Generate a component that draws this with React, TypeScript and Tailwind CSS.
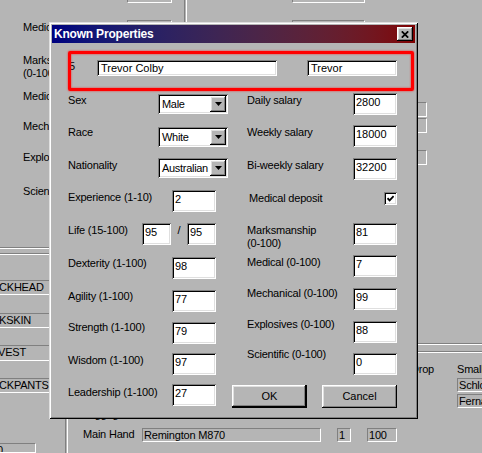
import React from "react";

const sunkenWhite =
  "bg-white shadow-[inset_1px_1px_0_#808080,inset_-1px_-1px_0_#ffffff,inset_2px_2px_0_#000000,inset_-2px_-2px_0_#dfdfdf]";
const raised =
  "bg-[#b5b5b5] shadow-[inset_-1px_-1px_0_#000000,inset_1px_1px_0_#ffffff,inset_-2px_-2px_0_#808080,inset_2px_2px_0_#dfdfdf]";
const flatField =
  "border border-t-[#808080] border-l-[#808080] border-r-white border-b-white";
const hGroove = "h-[2px] border-t border-b border-t-[#808080] border-b-white";
const vGroove = "w-[3px] shrink-0 border-l border-r border-l-[#808080] border-r-white";

function Input({ value, w = "w-[44px]" }: { value: string; w?: string }) {
  return (
    <div className={`${w} h-[22px] shrink-0 ${sunkenWhite} pl-[3px] pt-[3px] leading-[13px] tracking-normal whitespace-nowrap`}>
      {value}
    </div>
  );
}

function Combo({ value }: { value: string }) {
  return (
    <div className={`w-[70px] h-[20px] shrink-0 ${sunkenWhite} p-[2px] flex items-center`}>
      <span className="flex-1 pl-[2px] leading-[13px] tracking-[-0.3px] whitespace-nowrap overflow-hidden">{value}</span>
      <div className={`w-[16px] h-[16px] shrink-0 ${raised} flex items-center justify-center`}>
        <svg width="7" height="4" viewBox="0 0 7 4">
          <polygon points="0,0 7,0 3.5,4" fill="#000" />
        </svg>
      </div>
    </div>
  );
}

function LeftRow({
  h,
  label,
  lw,
  lmt,
  children,
}: {
  h: string;
  label: string;
  lw: string;
  lmt: string;
  children: React.ReactNode;
}) {
  return (
    <div className={`flex items-start ${h}`}>
      <div className={`${lw} ${lmt} shrink-0 whitespace-nowrap`}>{label}</div>
      {children}
    </div>
  );
}

export default function App() {
  return (
    <div className="relative w-[482px] h-[453px] overflow-hidden bg-[#b5b5b5] font-['Liberation_Sans',Arial,sans-serif] text-[11px] leading-[13px] text-black tracking-[-0.2px]">
      {/* Background application */}
      <div className="flex flex-col">
        {/* Band 1 */}
        <div className="flex h-[247px] shrink-0">
          <div className="w-[49px] shrink-0 pl-[23px] flex flex-col whitespace-nowrap overflow-hidden">
            <div className="mt-[21px]">Medical deposit</div>
            <div className="mt-[20px]">
              Marksmanship
              <br />
              (0-100)
            </div>
            <div className="mt-[10px]">Medical (0-100)</div>
            <div className="mt-[17px]">Mechanical (0-100)</div>
            <div className="mt-[18px]">Explosives (0-100)</div>
            <div className="mt-[21px]">Scientific (0-100)</div>
          </div>
          <div className="w-[78px] shrink-0" />
          <div className="w-[57px] shrink-0 flex flex-col">
            <div className="w-[45px] h-[3px] border-l border-r border-b border-l-[#808080] border-r-white border-b-white" />
            <div className={`mt-[17px] w-[45px] h-[21px] ${flatField}`} />
          </div>
          <div className={vGroove} />
          <div className="w-[105px] shrink-0" />
          <div className="w-[73px] shrink-0 flex flex-col">
            <div className="w-[73px] h-[3px] border-l border-r border-b border-l-[#808080] border-r-white border-b-white" />
            <div className={`mt-[17px] w-[73px] h-[21px] ${flatField}`} />
          </div>
          <div className="w-[15px] shrink-0" />
          <div className="w-[47px] shrink-0 flex flex-col">
            <div className={`mt-[102px] h-[15px] ${flatField}`} />
            <div className={`mt-[1px] h-[15px] ${flatField}`} />
            <div className={`mt-[17px] h-[15px] ${flatField}`} />
          </div>
        </div>

        {/* Band 2 */}
        <div className="flex h-[172px] shrink-0">
          <div className="w-[65px] shrink-0 flex flex-col">
            <div className={hGroove} />
            <div className={`mt-[4px] ${hGroove}`} />
            <div className={`mt-[25px] -ml-[10px] w-[75px] h-[15px] ${flatField} pl-[8px] whitespace-nowrap overflow-hidden`}>CKHEAD</div>
            <div className={`mt-[18px] -ml-[10px] w-[75px] h-[15px] ${flatField} pl-[8px] whitespace-nowrap overflow-hidden`}>KSKIN</div>
            <div className={`mt-[17px] -ml-[10px] w-[75px] h-[16px] ${flatField} pl-[7px] whitespace-nowrap overflow-hidden`}>VEST</div>
            <div className={`mt-[17px] -ml-[10px] w-[75px] h-[15px] ${flatField} pl-[8px] whitespace-nowrap overflow-hidden`}>CKPANTS</div>
          </div>
          <div className="flex-1" />
          <div className="w-[64px] shrink-0 flex flex-col">
            <div className={`mt-[96px] ${hGroove}`} />
            <div className={`mt-[6px] ${hGroove}`} />
            <div className="mt-[10px] flex">
              <div className="w-[39px] shrink-0">
                <span className="block -ml-[7px]">Drop</span>
              </div>
              <div className="flex-1 flex flex-col whitespace-nowrap">
                <div>Small Arms</div>
                <div className={`mt-[2px] w-[40px] h-[14px] ${flatField} pl-[1px] leading-[12px] overflow-hidden`}>Schlosser</div>
                <div className={`mt-[2px] w-[40px] h-[14px] ${flatField} pl-[1px] leading-[12px] overflow-hidden`}>Fernandez</div>
              </div>
            </div>
          </div>
        </div>

        {/* Band 3 */}
        <div className="flex h-[34px] shrink-0">
          <div className="w-[36px] shrink-0 flex flex-col">
            <div className={`mt-[24px] -ml-[10px] w-[46px] h-[15px] ${flatField} pl-[6px] overflow-hidden`}>0</div>
          </div>
          <div className="w-[29px] shrink-0" />
          <div className={vGroove} />
          <div className="w-[15px] shrink-0" />
          <div className="flex flex-col">
            <div className="-mt-[11px] h-[13px] whitespace-nowrap">Luggage</div>
            <div className="mt-[7px] flex items-start">
              <div className="w-[59px] shrink-0 whitespace-nowrap">Main Hand</div>
              <div className={`w-[179px] h-[14px] shrink-0 ${flatField} pl-[1px] leading-[12px] whitespace-nowrap overflow-hidden`}>
                Remington M870
              </div>
              <div className={`ml-[16px] w-[14px] h-[14px] shrink-0 ${flatField} pl-[1px] leading-[12px]`}>1</div>
              <div className={`ml-[16px] w-[30px] h-[14px] shrink-0 ${flatField} pl-[1px] leading-[12px]`}>100</div>
            </div>
          </div>
        </div>
      </div>

      {/* Dialog window */}
      <div className="absolute left-[49px] top-[22px] w-[369px] h-[397px] bg-[#b5b5b5] p-[3px] flex flex-col shadow-[inset_1px_1px_0_#dfdfdf,inset_-1px_-1px_0_#000000,inset_2px_2px_0_#ffffff,inset_-2px_-2px_0_#808080]">
        <div className="h-[18px] shrink-0 flex items-center justify-between pl-[2px] pr-[2px] bg-linear-to-r from-[#000080] to-[#800000]">
          <span className="text-white font-bold text-[12px] leading-[14px] tracking-[-0.2px]">Known Properties</span>
          <div className={`w-[16px] h-[14px] ${raised} flex items-center justify-center`}>
            <svg width="8" height="7" viewBox="0 0 8 7">
              <path d="M0.8 0.3 L7.2 6.7 M7.2 0.3 L0.8 6.7" stroke="#000" strokeWidth="1.7" />
            </svg>
          </div>
        </div>

        <div className="pl-[16px] pt-[17px] flex flex-col">
          {/* Name row */}
          <div className="flex h-[16px]">
            <div className="w-[29px] shrink-0 pl-[1px]">5</div>
            <div className={`w-[180px] h-[16px] shrink-0 ${sunkenWhite} pl-[4px] pt-[2px] leading-[13px] tracking-normal`}>Trevor Colby</div>
            <div className={`ml-[30px] w-[90px] h-[16px] shrink-0 ${sunkenWhite} pl-[4px] pt-[2px] leading-[13px] tracking-normal`}>Trevor</div>
          </div>

          <div className="mt-[17px] flex">
            {/* Left column */}
            <div className="w-[179px] shrink-0 flex flex-col pt-[1px]">
              <LeftRow h="h-[33px]" label="Sex" lw="w-[90px]" lmt="mt-0">
                <Combo value="Male" />
              </LeftRow>
              <LeftRow h="h-[31px]" label="Race" lw="w-[90px]" lmt="-mt-[1px]">
                <Combo value="White" />
              </LeftRow>
              <LeftRow h="h-[32px]" label="Nationality" lw="w-[90px]" lmt="mt-[1px]">
                <Combo value="Australian" />
              </LeftRow>
              <LeftRow h="h-[33px]" label="Experience (1-10)" lw="w-[104px]" lmt="mt-[1px]">
                <Input value="2" />
              </LeftRow>
              <LeftRow h="h-[34px]" label="Life (15-100)" lw="w-[74px]" lmt="mt-[1px]">
                <Input value="95" w="w-[29px]" />
                <div className="w-[16px] shrink-0 text-center mt-[1px]">/</div>
                <Input value="95" w="w-[29px]" />
              </LeftRow>
              <LeftRow h="h-[33px]" label="Dexterity (1-100)" lw="w-[104px]" lmt="mt-0">
                <Input value="98" />
              </LeftRow>
              <LeftRow h="h-[32px]" label="Agility (1-100)" lw="w-[104px]" lmt="mt-0">
                <Input value="77" />
              </LeftRow>
              <LeftRow h="h-[31px]" label="Strength (1-100)" lw="w-[104px]" lmt="-mt-[1px]">
                <Input value="79" />
              </LeftRow>
              <LeftRow h="h-[31px]" label="Wisdom (1-100)" lw="w-[104px]" lmt="mt-[1px]">
                <Input value="97" />
              </LeftRow>
              <LeftRow h="h-[24px]" label="Leadership (1-100)" lw="w-[104px]" lmt="mt-[2px]">
                <Input value="27" />
              </LeftRow>
            </div>

            {/* Right column */}
            <div className="w-[150px] shrink-0 flex flex-col">
              <LeftRow h="h-[32px]" label="Daily salary" lw="w-[106px]" lmt="mt-[1px]">
                <Input value="2800" />
              </LeftRow>
              <LeftRow h="h-[33px]" label="Weekly salary" lw="w-[106px]" lmt="mt-[1px]">
                <Input value="18000" />
              </LeftRow>
              <LeftRow h="h-[34px]" label="Bi-weekly salary" lw="w-[106px]" lmt="mt-[1px]">
                <Input value="32200" />
              </LeftRow>
              <div className="flex items-start h-[31px]">
                <div className="w-[137px] shrink-0 pl-[2px] whitespace-nowrap">Medical deposit</div>
                <div className={`w-[13px] h-[13px] shrink-0 ${sunkenWhite} flex items-center justify-center`}>
                  <svg width="7" height="7" viewBox="0 0 7 7">
                    <polyline points="0.5,3.2 2.6,5.4 6.6,1.2" fill="none" stroke="#000" strokeWidth="1.8" />
                  </svg>
                </div>
              </div>
              <div className="flex items-start h-[32px]">
                <div className="w-[106px] shrink-0 mt-[1px] whitespace-nowrap">
                  Marksmanship
                  <br />
                  (0-100)
                </div>
                <Input value="81" />
              </div>
              <LeftRow h="h-[33px]" label="Medical (0-100)" lw="w-[106px]" lmt="mt-[1px]">
                <Input value="7" />
              </LeftRow>
              <LeftRow h="h-[33px]" label="Mechanical (0-100)" lw="w-[106px]" lmt="-mt-[1px]">
                <Input value="99" />
              </LeftRow>
              <LeftRow h="h-[32px]" label="Explosives (0-100)" lw="w-[106px]" lmt="-mt-[3px]">
                <Input value="88" />
              </LeftRow>
              <LeftRow h="h-[32px]" label="Scientific (0-100)" lw="w-[106px]" lmt="-mt-[5px]">
                <Input value="0" />
              </LeftRow>
              <div className="flex -ml-[15px]">
                <div className="w-[75px] h-[23px] shrink-0 bg-[#b5b5b5] flex items-center justify-center tracking-normal shadow-[inset_-2px_-2px_0_#000000,inset_1px_1px_0_#ffffff,inset_-3px_-3px_0_#808080,inset_2px_2px_0_#dfdfdf]">
                  OK
                </div>
                <div className={`ml-[15px] w-[75px] h-[23px] shrink-0 ${raised} flex items-center justify-center tracking-normal`}>
                  Cancel
                </div>
              </div>
            </div>
          </div>
        </div>
      </div>

      {/* Red highlight annotation */}
      <div className="absolute left-[68px] top-[51px] w-[346px] h-[40px] border-[3px] border-[#ff0000] rounded-[2px] shadow-[0_0_2px_#ff2020,inset_0_0_2px_#ff2020] pointer-events-none" />
    </div>
  );
}
